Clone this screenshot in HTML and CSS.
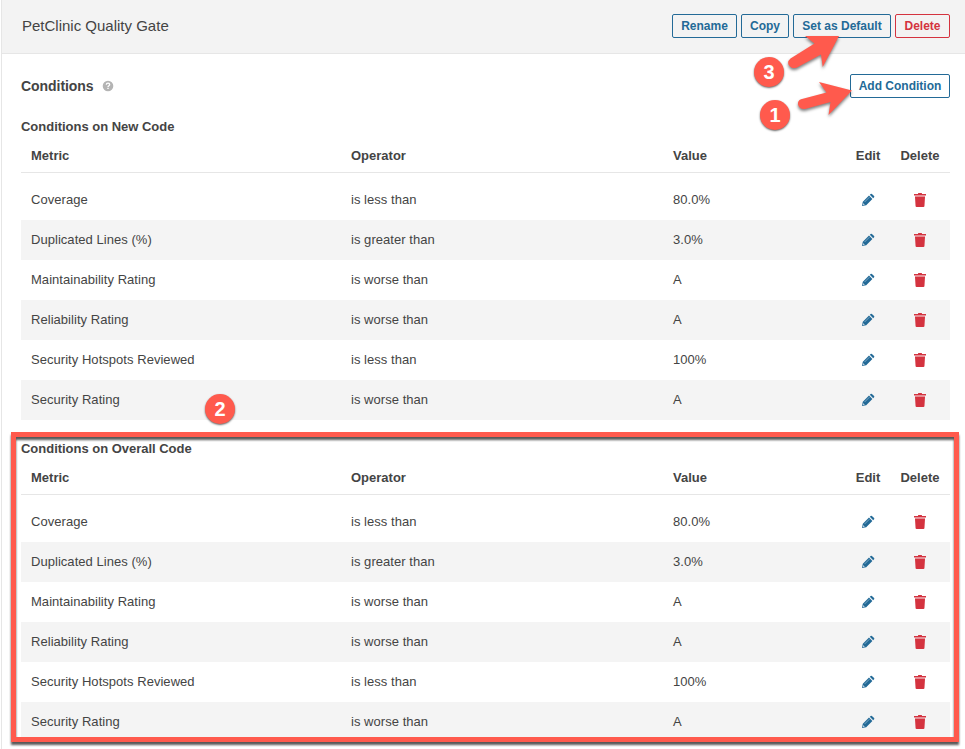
FILE: index.html
```html
<!DOCTYPE html>
<html lang="en">
<head>
<meta charset="utf-8">
<title>PetClinic Quality Gate</title>
<link rel="stylesheet" href="styles.css">
</head>
<body>
<svg class="defs" aria-hidden="true">
  <symbol id="edit" viewBox="0 0 14 14">
    <path fill="#236a97" d="M1 13l.8-4.200 6.200-6.200 3.400 3.400-6.200 6.200zM8.800 1.800l.9-.9q.6-.5 1.200 0l2.200 2.200q.5.6 0 1.200l-.9.9z"/>
    <path fill="none" stroke="#8fb6cf" stroke-width=".8" d="M3.600 9l4.800-4.800"/>
    <path fill="#fff" d="M2.200 10.300l1.500 1.500-.8.300-1-.9z"/>
  </symbol>
  <symbol id="trash" viewBox="0 0 12 14">
    <path fill="#d4333f" d="M0 1h4V.400q0-.4.400-.4h3.200q.4 0 .4.400V1h4v1.500H0z"/>
    <path fill="#e68c94" d="M1 2.500h10v1.500H1z"/>
    <path fill="#d4333f" d="M1 4h10l-.6 9.200q-.1.800-.9.800h-7q-.8 0-.9-.8z"/>
  </symbol>
</svg>
<main class="page">
  <header class="bar">
    <h1>PetClinic Quality Gate</h1>
    <div class="actions">
      <button class="b-rename">Rename</button>
      <button class="b-copy">Copy</button>
      <button class="b-default">Set as Default</button>
      <button class="b-delete">Delete</button>
    </div>
  </header>
  <section class="content">
    <div class="title">
      <h2>Conditions</h2>
      <svg class="help" viewBox="0 0 12 12"><circle cx="6" cy="6" r="5.300" fill="#b4b4b4"/><path d="M4.300 4.700Q4.400 3.200 6 3.200T7.700 4.600Q7.700 5.300 6.800 5.800 6 6.200 6 7" fill="none" stroke="#fff" stroke-width="1.300"/><path fill="#fff" d="M5.300 7.800h1.400v1.300H5.300z"/></svg>
      <button class="b-add">Add Condition</button>
    </div>
    <h3>Conditions on New Code</h3>
    <table>
      <thead><tr><th class="metric">Metric</th><th class="op">Operator</th><th class="value">Value</th><th class="edit">Edit</th><th class="del">Delete</th></tr></thead>
      <tbody>
        <tr class="gap"><td colspan="5"></td></tr>
        <tr><td>Coverage</td><td>is less than</td><td>80.0%</td><td><svg class="pen"><use href="#edit"/></svg></td><td><svg class="bin"><use href="#trash"/></svg></td></tr>
        <tr><td>Duplicated Lines (%)</td><td>is greater than</td><td>3.0%</td><td><svg class="pen"><use href="#edit"/></svg></td><td><svg class="bin"><use href="#trash"/></svg></td></tr>
        <tr><td>Maintainability Rating</td><td>is worse than</td><td>A</td><td><svg class="pen"><use href="#edit"/></svg></td><td><svg class="bin"><use href="#trash"/></svg></td></tr>
        <tr><td>Reliability Rating</td><td>is worse than</td><td>A</td><td><svg class="pen"><use href="#edit"/></svg></td><td><svg class="bin"><use href="#trash"/></svg></td></tr>
        <tr><td>Security Hotspots Reviewed</td><td>is less than</td><td>100%</td><td><svg class="pen"><use href="#edit"/></svg></td><td><svg class="bin"><use href="#trash"/></svg></td></tr>
        <tr><td>Security Rating</td><td>is worse than</td><td>A</td><td><svg class="pen"><use href="#edit"/></svg></td><td><svg class="bin"><use href="#trash"/></svg></td></tr>
      </tbody>
    </table>
    <h3>Conditions on Overall Code</h3>
    <table>
      <thead><tr><th class="metric">Metric</th><th class="op">Operator</th><th class="value">Value</th><th class="edit">Edit</th><th class="del">Delete</th></tr></thead>
      <tbody>
        <tr class="gap"><td colspan="5"></td></tr>
        <tr><td>Coverage</td><td>is less than</td><td>80.0%</td><td><svg class="pen"><use href="#edit"/></svg></td><td><svg class="bin"><use href="#trash"/></svg></td></tr>
        <tr><td>Duplicated Lines (%)</td><td>is greater than</td><td>3.0%</td><td><svg class="pen"><use href="#edit"/></svg></td><td><svg class="bin"><use href="#trash"/></svg></td></tr>
        <tr><td>Maintainability Rating</td><td>is worse than</td><td>A</td><td><svg class="pen"><use href="#edit"/></svg></td><td><svg class="bin"><use href="#trash"/></svg></td></tr>
        <tr><td>Reliability Rating</td><td>is worse than</td><td>A</td><td><svg class="pen"><use href="#edit"/></svg></td><td><svg class="bin"><use href="#trash"/></svg></td></tr>
        <tr><td>Security Hotspots Reviewed</td><td>is less than</td><td>100%</td><td><svg class="pen"><use href="#edit"/></svg></td><td><svg class="bin"><use href="#trash"/></svg></td></tr>
        <tr><td>Security Rating</td><td>is worse than</td><td>A</td><td><svg class="pen"><use href="#edit"/></svg></td><td><svg class="bin"><use href="#trash"/></svg></td></tr>
      </tbody>
    </table>
  </section>
</main>
<div class="frame"></div>
<svg class="arrows" viewBox="0 0 120 105">
  <path d="M45.500 28.500Q42 31.500 43.700 35 46.500 39.500 52 37.500L76 24.500 77.700 37 94 6 60 6 69.500 13.500z"/>
  <path d="M56 69.200Q52.500 70.500 53 74.500 54.500 79.500 60 79L85.500 72 83.500 85 107 60.500 74 52 81.500 62.500z"/>
</svg>
<div class="badge n3">3</div>
<div class="badge n1">1</div>
<div class="badge n2">2</div>
</body>
</html>
```
FILE: styles.css
```css
* { box-sizing: border-box; }
body {
  margin: 0;
  height: 749px;
  overflow: hidden;
  position: relative;
  background: #fff;
  color: #444;
  font: 13px/20px "Liberation Sans", Arial, sans-serif;
}
.defs { display: none; }
.page { margin-left: 1px; height: 749px; border-left: 1px solid #e6e6e6; }
.bar {
  display: flex;
  justify-content: space-between;
  height: 54px;
  padding: 14px 15px 0 20px;
  background: #f3f3f3;
  border-bottom: 1px solid #e6e6e6;
}
h1, h2, h3 { margin: 0; }
h1 { font-size: 15px; font-weight: 400; line-height: 24px; }
.actions { display: flex; gap: 4px; }
button {
  height: 24px;
  padding: 0;
  border: 1px solid #236a97;
  border-radius: 2px;
  background: transparent;
  color: #236a97;
  font: bold 12px/22px "Liberation Sans", Arial, sans-serif;
  text-align: center;
}
.b-rename { width: 65px; }
.b-copy { width: 48px; }
.b-default { width: 98px; }
.b-delete { width: 55px; border-color: #d4333f; color: #d4333f; }
.content { padding: 20px 15px 0 19px; }
.title { display: flex; align-items: center; height: 24px; }
h2 { font-size: 14px; line-height: 24px; letter-spacing: -.05px; }
.help { width: 12px; height: 12px; margin-left: 8px; }
.b-add { width: 100px; margin-left: auto; background: #fff; }
h3 { margin-top: 19px; font-size: 13px; line-height: 20px; letter-spacing: -.02px; }
table { width: 929px; border-collapse: separate; border-spacing: 0; table-layout: fixed; }
th, td { padding: 0 10px; text-align: left; }
th { height: 36px; border-bottom: 1px solid #e6e6e6; padding-top: 2px; }
td { height: 40px; letter-spacing: .04px; }
.gap td { height: 7px; line-height: 0; }
.metric { width: 320px; }
.op { width: 322px; }
.edit { width: 44px; }
.del { width: 60px; }
th.edit, th.del, td:nth-child(4), td:nth-child(5) { padding-left: 0; padding-right: 0; text-align: center; }
tbody tr:nth-child(odd):not(.gap) td { background: #f4f4f4; }
td svg { display: block; margin: 0 auto; }
.pen { width: 14px; height: 14px; }
.bin { width: 12px; height: 14px; }
.frame {
  position: absolute;
  left: 11px;
  top: 432px;
  width: 948px;
  height: 310px;
  border: 5px solid #ff5a4d;
  filter: drop-shadow(0 3px 1px rgba(0, 0, 0, .65));
}
.arrows {
  position: absolute;
  left: 745px;
  top: 30px;
  width: 120px;
  height: 105px;
  fill: #ff5a4d;
  filter: drop-shadow(0 2px 1.500px rgba(0, 0, 0, .5));
}
.badge {
  position: absolute;
  width: 30px;
  height: 30px;
  border-radius: 50%;
  background: #ff5a4d;
  box-shadow: 0 1px 2px rgba(0, 0, 0, .6);
  color: #fff;
  font-size: 20px;
  font-weight: bold;
  line-height: 30px;
  text-align: center;
}
.n3 { left: 754px; top: 57px; }
.n1 { left: 760px; top: 100px; }
.n2 { left: 205px; top: 394px; }
```
